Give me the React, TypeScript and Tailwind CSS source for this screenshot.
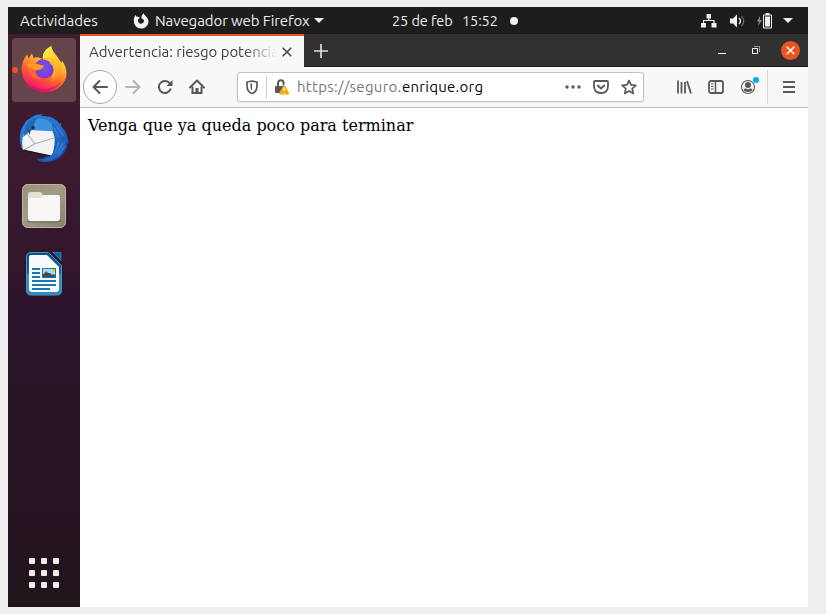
import React from "react";

const uiFont = "font-['Ubuntu','Noto_Sans',sans-serif]";

function FirefoxGlyph() {
  return (
    <svg width="16" height="16" viewBox="0 0 16 16" className="block">
      <path d="M.8 8C.6 5.500 1.200 3.400 2.700 1.900L3.200 3.500 5.300 3.700 7 4.800 5.500 6Q4.800 7 5 8.100C5.300 9.800 6.600 10.800 8.200 10.700 10.100 10.600 11.100 9.200 10.900 7.700 10.700 6.400 9.600 5.600 8.500 5.500 8.200 3.400 9 1.400 10.600.2 10.800 1.700 13.700 3.200 15 6.100 15.900 8.200 15.500 11.200 13.600 13.200 11.200 15.800 7.300 16.300 4.200 14.500 2.100 13.200 1 10.700.8 8Z" fill="#f2f2f2" />
    </svg>
  );
}

function FirefoxLogo() {
  return (
    <svg width="48" height="48" viewBox="0 0 48 48" className="block">
      <defs>
        <linearGradient id="ffBody" x1=".75" y1=".05" x2=".3" y2="1">
          <stop offset="0" stopColor="#fff04a" />
          <stop offset=".35" stopColor="#ffb32c" />
          <stop offset=".62" stopColor="#ff622d" />
          <stop offset="1" stopColor="#f00873" />
        </linearGradient>
        <radialGradient id="ffGlobe" cx=".45" cy=".45" r=".65">
          <stop offset="0" stopColor="#7656ef" />
          <stop offset=".65" stopColor="#7840cf" />
          <stop offset="1" stopColor="#a52ac4" />
        </radialGradient>
        <linearGradient id="ffFlame" x1="0" y1="0" x2=".6" y2="1">
          <stop offset="0" stopColor="#fff34f" />
          <stop offset=".5" stopColor="#ffd034" />
          <stop offset="1" stopColor="#ff9a20" stopOpacity=".4" />
        </linearGradient>
      </defs>
      <path d="M2 27C.8 20 3 13 7.200 8.500L8.400 12.500 12 7.500 13.500 12C16 11 18 11 20 12L23 13C22 7 26 3 31.200 0 31.500 4 34 7 37 10.500L41.500 17 42 14.500C46 20 48 27 45.300 33.500 42 41.500 34 46.200 25 46 13 46 3.700 38 2 27Z" fill="url(#ffBody)" />
      <circle cx="24.500" cy="22.500" r="10" fill="url(#ffGlobe)" />
      <path d="M8 19 14 17 20 18.700 23 21C21.500 23.500 20 24 16 24.500 14.500 27 16 32 21 33.500 13.500 34.500 8 28 8 19Z" fill="#ff6635" />
      <path d="M6.500 19C12 15.500 17 18.500 24 19.800 22.500 23 20 23.500 16 24.300 12 23 9 21.500 6.500 19Z" fill="#ff9d24" />
      <path d="M23 13C22 7 26 3 31.200 0 31.500 6 38 9 41 18 43 26 39 34 30 35.500 34.500 30 36 23 33 18 31 15.500 27 14.500 23 13Z" fill="url(#ffFlame)" />
      <path d="M23 13C28 12 32 14 34 17L30 16.300C35 20 35.500 26 32.500 31" fill="none" stroke="#ffb928" strokeWidth="1.400" />
      <path d="M6 36C16 45 32 45 42 35 38 42 32 45.600 24 45.700 16 45.700 10 42 6 36Z" fill="#d90073" opacity=".45" />
    </svg>
  );
}

function ThunderbirdLogo() {
  return (
    <svg width="50" height="50" viewBox="0 0 48 48" className="block">
      <defs>
        <linearGradient id="tbBlue" x1="0" y1="0" x2="1" y2="1">
          <stop offset="0" stopColor="#2684d6" />
          <stop offset=".5" stopColor="#2672cf" />
          <stop offset="1" stopColor="#163a91" />
        </linearGradient>
      </defs>
      <path d="M7 7.500C13 4 14 1 23 1.200L20.500 3C31 2 37 7 38.500 10L40 9.500 40.500 13C44 16 47.500 22 47.500 30L46.200 28.500C47 37 39 47.500 24 47 21 47 19 46 17 44 25 45 29 41 29 38L3.500 35.500C0 29 0 20 3 14Z" fill="url(#tbBlue)" />
      <path d="M11 12C14 3 27 4 32 11 35 18 31 21 32 29 25 20 20 16 11 15Z" fill="#3d92dc" />
      <path d="M6.500 17Q10 15 14 16.500L32 17.500C36 24 34 34 31.500 41.500L4 35.500C2 28 3.500 20 6.500 17Z" fill="#f4f3f3" />
      <path d="M7 19 15.500 29.500 34 24M15 29.500 5 35.500" fill="none" stroke="#b2adad" strokeWidth="1" />
      <path d="M4 35.700 31 41.500" stroke="#141827" strokeWidth="1.300" />
      <path d="M32 9C30 19 38 18 36 30 35 38 29 43 23 46.500 39 45 46 35 44 25L40 29C42 19 37 15 32 9Z" fill="#2565c5" />
      <path d="M33 13 38 23M36 13 43 22M38 28 35 37M42 29 37 39M44 32 38 41" stroke="#3d95df" strokeWidth=".8" />
      <path d="M5 18C7 8 14 5 17 5 13 11 16 16 11 17L4 23Z" fill="#1f68bd" />
      <circle cx="13.500" cy="14" r="1.500" fill="#171d3c" />
      <path d="M8 16 10.500 21 11 16Z" fill="#343c57" />
    </svg>
  );
}

function FilesLogo() {
  return (
    <svg width="46" height="46" viewBox="0 0 46 46" className="block">
      <defs>
        <linearGradient id="fileTile" x1="0" y1="0" x2=".8" y2="1">
          <stop offset="0" stopColor="#999078" />
          <stop offset=".5" stopColor="#a39b83" />
          <stop offset="1" stopColor="#8e8570" />
        </linearGradient>
      </defs>
      <rect x="1.500" y="1.500" width="43" height="43" rx="5" fill="url(#fileTile)" stroke="#bbb5a3" />
      <path d="M6 38Q6 39 9 39H37Q40 39 40 36" fill="none" stroke="#716b59" strokeWidth="1" />
      <path d="M7 15V11Q7 9 9.500 9H19.500L22 12 37 12Q39 12 39 14V17H7Z" fill="#e2dfd3" />
      <path d="M7 15H20L23.500 12H37Q39 12 39 14.500V35Q39 38 36 38H10Q7 38 7 35Z" fill="#f8f7f5" />
    </svg>
  );
}

function WriterLogo() {
  return (
    <svg width="38" height="46" viewBox="0 0 38 46" className="block">
      <defs>
        <linearGradient id="writerBlue" x1="0" y1="0" x2="0" y2="1">
          <stop offset="0" stopColor="#0b5186" />
          <stop offset=".49" stopColor="#14659a" />
          <stop offset=".5" stopColor="#3a91bd" />
          <stop offset="1" stopColor="#318bb9" />
        </linearGradient>
      </defs>
      <path d="M6 1.500H23.500L36.500 14.500V39.500Q36.500 44 32 44H6Q1.500 44 1.500 39.500V6Q1.500 1.500 6 1.500Z" fill="url(#writerBlue)" stroke="#3c9bc4" />
      <path d="M28 1.500H36V9.500Z" fill="#126ba0" stroke="#2683b2" strokeWidth=".8" />
      <path d="M6 4H22L34 16V38Q34 41 31 41H7Q4 41 4 38V6Q4 4 6 4Z" fill="#f8fafb" />
      <path d="M7 18H15M7 22H15M7 26H15M7 30H31M7 34H31M7 38H25" stroke="#147ab1" strokeWidth="2" />
      <rect x="17.500" y="17.500" width="13" height="9" fill="#a6dcf8" stroke="#147ab1" strokeWidth="1" />
      <path d="M18 26V23L20 22 21 20 23 22 25 22 27 24 28 23 30 24V26Z" fill="#4a4a4a" />
      <path d="M27 18H30V21Q27.500 21 27 18Z" fill="#f1bd19" />
    </svg>
  );
}

function DownCaret() {
  return <svg width="10" height="5" viewBox="0 0 10 5" className="block"><path d="M0 0H10L5 5Z" fill="#eee" /></svg>;
}

function TopBar() {
  return (
    <header className="flex h-[27px] shrink-0 items-center bg-[#1d1d1d] pl-3 text-[15px] leading-[27px] text-[#ededed]">
      <span className="w-[113px] whitespace-nowrap tracking-[0.06px]">Actividades</span>
      <FirefoxGlyph />
      <span className="ml-[6px] w-[159px] whitespace-nowrap tracking-[-0.09px]">Navegador web Firefox</span>
      <DownCaret />
      <span className="ml-[68px] w-[70px] text-[14.500px] whitespace-nowrap tracking-[-0.1px]">25 de feb</span>
      <span className="w-12 text-[14.500px] tracking-[-0.1px]">15:52</span>
      <span className="size-2 rounded-full bg-[#f1f1f1]" />
      <svg width="16" height="14" viewBox="0 0 16 14" className="ml-[183px]">
        <path d="M5.500 0H10V4.500H5.500ZM0 9H5V13.500H0ZM10.500 9H15.500V13.500H10.500Z" fill="#f0f0f0" />
        <path d="M7.750 4V7M2.500 9V6.500H13V9" fill="none" stroke="#f0f0f0" strokeWidth="1.200" />
      </svg>
      <svg width="16" height="14" viewBox="0 0 16 14" className="ml-[13px]">
        <path d="M0 4.500H3L7 .5V13.500L3 9.500H0Z" fill="#f0f0f0" />
        <path d="M9 4Q12 7 9 10" fill="none" stroke="#eee" strokeWidth="1.300" />
        <path d="M11.500 2Q16 7 11.500 12" fill="none" stroke="#777" strokeWidth="1.100" />
      </svg>
      <svg width="16" height="16" viewBox="0 0 16 16" className="ml-[11px]">
        <path d="M3 3 0 8.500H2L1 13 5 7H3Z" fill="#8c8c8c" />
        <path d="M6.500 2H14.500V15H6.500Z" fill="none" stroke="#f0f0f0" strokeWidth="1" />
        <path d="M8 3.500H13V13.500H8ZM8.500 0H12.500V2H8.500Z" fill="#f0f0f0" />
      </svg>
      <span className="ml-[10px]"><DownCaret /></span>
    </header>
  );
}

function Dock() {
  return (
    <aside className="flex w-[72px] shrink-0 flex-col justify-between bg-[linear-gradient(180deg,#401d2c_0%,#3b192f_25%,#2d152b_48%,#281525_75%,#20141b_100%)] px-1 pt-1 pb-[19px]">
      <div className="flex flex-col gap-1">
        <div className="relative grid size-16 place-items-center rounded bg-[#654549]">
          <FirefoxLogo />
          <span className="absolute top-[29px] left-0 size-[6px] rounded-full bg-[#e95420]" />
        </div>
        <div className="grid size-16 place-items-center"><ThunderbirdLogo /></div>
        <div className="grid size-16 place-items-center"><FilesLogo /></div>
        <div className="grid size-16 place-items-center"><WriterLogo /></div>
      </div>
      <div className="mx-auto grid grid-cols-3 gap-[6px]">
        {Array.from({ length: 9 }, (_, i) => <span key={i} className="size-[6px] rounded-[1px] bg-[#f0eeeb]" />)}
      </div>
    </aside>
  );
}

function TabBar() {
  return (
    <div className="flex h-[33px] shrink-0 items-center bg-[#333031] shadow-[inset_0_-1px_#1b191a]">
      <div className="flex h-full w-[224px] items-center border-t-2 border-[#ef5326] bg-[#f8f8f8] pl-[9px]">
        <span className="w-[188px] overflow-hidden text-[15px] leading-[29px] tracking-[-0.06px] whitespace-nowrap text-[#3e3e42] [mask-image:linear-gradient(to_right,black_82%,transparent_100%)]">Advertencia: riesgo potencial</span>
        <svg width="10" height="10" viewBox="0 0 10 10" className="ml-[5px]"><path d="M.7.7 9.300 9.300M9.300.7.7 9.300" stroke="#4a4a4f" strokeWidth="1.600" /></svg>
      </div>
      <svg width="14" height="14" viewBox="0 0 14 14" className="ml-[10px]"><path d="M7 0V14M0 7H14" stroke="#ddd" strokeWidth="1.700" /></svg>
      <span className="mt-[5px] ml-auto h-px w-2 bg-white" />
      <svg width="9" height="9" viewBox="0 0 9 9" className="ml-[26px]"><path d="M.5 2.500H5.500V7.500H.5Z" fill="none" stroke="#fff" /><path d="M2 .5H7.500V6" fill="none" stroke="#999" /></svg>
      <span className="mr-2 ml-5 grid size-[19px] place-items-center rounded-full bg-[#e95420]">
        <svg width="9" height="9" viewBox="0 0 9 9"><path d="M.7.7 8.300 8.300M8.300.7.7 8.300" stroke="#fff" strokeWidth="1.500" /></svg>
      </span>
    </div>
  );
}

const iconProps = { width: 16, height: 16, viewBox: "0 0 16 16", fill: "none", stroke: "#58585b", strokeWidth: 2, className: "shrink-0" };

function AddressBar() {
  return (
    <div className="ml-8 flex h-[30px] w-[407px] items-center rounded-[3px] border border-[#c2c2c2] bg-white pl-[6px] shadow-[0_1px_3px_#00000012]">
      <svg {...iconProps}>
        <path d="M8 2 13 3V7C13 11 11 13.500 8 14.500 5 13.500 3 11 3 7V3Z" strokeWidth="1.700" strokeLinejoin="round" />
        <path d="M6.500 4.500 8 4V11.500Q6.500 10.500 6.500 8Z" fill="#58585b" stroke="none" />
      </svg>
      <span className="ml-[6px] h-[22px] w-px bg-[#c8c8c8]" />
      <svg width="16" height="16" viewBox="0 0 16 16" className="ml-[7px] shrink-0">
        <path d="M4 7V4.500Q4 1.200 6.800 1.200T9.700 4.500V7" fill="none" stroke="#58585b" strokeWidth="2" />
        <rect x="1" y="7" width="10" height="7" rx="1" fill="#58585b" />
        <path d="M10.500 5 16 15H5Z" fill="#fff" />
        <path d="M10.500 6.500 15 15H5.500Z" fill="#ffa900" stroke="#ffa900" strokeLinejoin="round" />
        <path d="M10.300 9V12M10.300 13.500V14.500" stroke="#fff" strokeWidth="1.200" />
      </svg>
      <span className="ml-[7px] w-[105px] text-[15px] tracking-[0.28px] whitespace-nowrap text-[#77777b]">https://seguro.</span>
      <span className="text-[15px] tracking-[0.26px] whitespace-nowrap text-[#080808]">enrique.org</span>
      <svg {...iconProps} className="ml-auto"><circle cx="2" cy="8" r="1" fill="#58585b" strokeWidth="1.400" /><circle cx="8" cy="8" r="1" fill="#58585b" strokeWidth="1.400" /><circle cx="14" cy="8" r="1" fill="#58585b" strokeWidth="1.400" /></svg>
      <svg {...iconProps} className="ml-3"><path d="M2 2H14Q15 2 15 3V7Q15 14 8 14T1 7V3Q1 2 2 2Z" strokeWidth="1.800" /><path d="M4.700 6.500 8 9.500 11.300 6.500" strokeWidth="1.800" strokeLinecap="round" strokeLinejoin="round" /></svg>
      <svg {...iconProps} className="mr-[6px] ml-3"><path d="M8 1.500 10 5.800 14.800 6.400 11.200 9.600 12.200 14.500 8 12.100 3.800 14.500 4.800 9.600 1.200 6.400 6 5.800Z" strokeWidth="1.700" strokeLinejoin="round" /></svg>
    </div>
  );
}

function Toolbar() {
  return (
    <div className="flex h-[41px] shrink-0 items-center border-b border-[#bebebe] bg-[#f8f8f8] pl-[3px]">
      <span className="grid size-[34px] place-items-center rounded-full border border-[#aaa] bg-[#fdfdfd]">
        <svg {...iconProps}><path d="M15 8H1.500M7.500 2 1.500 8 7.500 14" strokeLinecap="round" strokeLinejoin="round" /></svg>
      </span>
      <svg {...iconProps} stroke="#b5b5b6" className="ml-2"><path d="M1 8H14.500M8.500 2 14.500 8 8.500 14" strokeLinecap="round" strokeLinejoin="round" /></svg>
      <svg {...iconProps} className="ml-4"><path d="M13.500 10.200A6 6 0 1 1 12.800 4.500" strokeLinecap="round" /><path d="M15.500 1V7H9.500Z" fill="#58585b" stroke="none" /></svg>
      <svg {...iconProps} className="ml-4"><path d="M1 8.500 8 1.500 15 8.500" strokeLinecap="round" strokeLinejoin="round" /><path d="M3.500 7.500V14H12.500V7.500" /><path d="M6.500 14V9H9.500V14" fill="#58585b" stroke="none" /></svg>
      <AddressBar />
      <svg {...iconProps} className="ml-8"><path d="M2 1.500V14.500M5.500 3V14.500M9 3V14.500M11 2 15 14.500" strokeWidth="1.800" /></svg>
      <svg {...iconProps} className="ml-4"><rect x="1" y="2" width="14" height="12" rx="2" strokeWidth="1.800" /><path d="M7.500 2V14" strokeWidth="1.500" /><path d="M3 5H5.500M3 7.500H5.500M3 10H5.500" strokeWidth="1" /></svg>
      <span className="relative ml-4 size-4">
        <svg {...iconProps} className="block"><circle cx="8" cy="8" r="6.500" strokeWidth="1.100" /><circle cx="8" cy="6" r="3" fill="#58585b" stroke="none" /><path d="M3.500 10.500Q5 9 6 9.500 8 11 10 9.500 11.500 9 12.500 10.500 11.500 13 8 13T3.500 10.500Z" fill="#58585b" stroke="none" /></svg>
        <span className="absolute -top-[2px] left-[13px] size-[6px] rounded-full bg-[#00adf7]" />
      </span>
      <span className="ml-[11px] h-[34px] w-px bg-[#d6d6d6]" />
      <svg {...iconProps} className="ml-[13px]"><path d="M2 3H14M2 8H14M2 13H14" strokeWidth="1.800" /></svg>
    </div>
  );
}

export default function App() {
  return (
    <div className="h-[614px] w-[826px] bg-[#eee] pt-[7px] pl-2">
      <div className={`flex h-[600px] w-[800px] flex-col ${uiFont}`}>
        <TopBar />
        <div className="flex min-h-0 flex-1">
          <Dock />
          <section className="flex min-w-0 flex-1 flex-col bg-white">
            <TabBar />
            <Toolbar />
            <main className="px-2 pt-2 font-['DejaVu_Serif',serif] text-[16px] leading-[19px] text-black">Venga que ya queda poco para terminar</main>
          </section>
        </div>
      </div>
    </div>
  );
}
